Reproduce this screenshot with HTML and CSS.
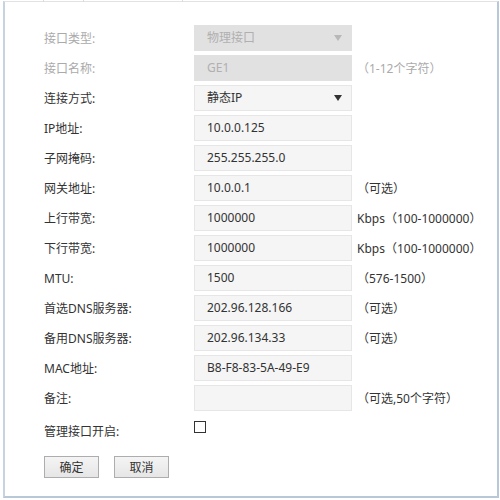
FILE: index.html
```html
<!DOCTYPE html>
<html lang="zh-CN">
<head>
<meta charset="utf-8">
<link rel="stylesheet" href="styles.css">
</head>
<body>
<div class="frame">
  <div class="tabbar"><span class="t1"></span><span class="t2"></span><span class="t3"></span><span class="t4"></span></div>
  <div class="form">
    <div class="row disabled">
      <div class="label">接口类型:</div>
      <div class="box select"><span>物理接口</span><i class="arrow"></i></div>
    </div>
    <div class="row disabled">
      <div class="label">接口名称:</div>
      <div class="box">GE1</div>
      <div class="hint">（1-12个字符）</div>
    </div>
    <div class="row">
      <div class="label">连接方式:</div>
      <div class="box select"><span>静态IP</span><i class="arrow"></i></div>
    </div>
    <div class="row">
      <div class="label">IP地址:</div>
      <div class="box">10.0.0.125</div>
    </div>
    <div class="row">
      <div class="label">子网掩码:</div>
      <div class="box">255.255.255.0</div>
    </div>
    <div class="row">
      <div class="label">网关地址:</div>
      <div class="box">10.0.0.1</div>
      <div class="hint">（可选）</div>
    </div>
    <div class="row">
      <div class="label">上行带宽:</div>
      <div class="box">1000000</div>
      <div class="hint">Kbps（100-1000000）</div>
    </div>
    <div class="row">
      <div class="label">下行带宽:</div>
      <div class="box">1000000</div>
      <div class="hint">Kbps（100-1000000）</div>
    </div>
    <div class="row">
      <div class="label">MTU:</div>
      <div class="box">1500</div>
      <div class="hint">（576-1500）</div>
    </div>
    <div class="row">
      <div class="label">首选DNS服务器:</div>
      <div class="box">202.96.128.166</div>
      <div class="hint">（可选）</div>
    </div>
    <div class="row">
      <div class="label">备用DNS服务器:</div>
      <div class="box">202.96.134.33</div>
      <div class="hint">（可选）</div>
    </div>
    <div class="row">
      <div class="label">MAC地址:</div>
      <div class="box">B8-F8-83-5A-49-E9</div>
    </div>
    <div class="row">
      <div class="label">备注:</div>
      <div class="box"></div>
      <div class="hint">（可选,50个字符）</div>
    </div>
    <div class="row check-row">
      <div class="label">管理接口开启:</div>
      <span class="checkbox"></span>
    </div>
    <div class="buttons">
      <button class="btn">确定</button>
      <button class="btn">取消</button>
    </div>
  </div>
</div>
</body>
</html>
```
FILE: styles.css
```css
html, body {
  margin: 0;
  padding: 0;
  background: #fff;
}
body {
  font-family: "Noto Sans", "Noto Sans CJK SC", sans-serif;
  font-size: 12px;
  color: #333;
}
.frame {
  margin: 1px 0 0 3px;
  width: 492px;
  height: 494px;
  border-top: 1px solid #e2e2e2;
  border-left: 2px solid #c6d4e2;
  border-right: 2px solid #b8c8d8;
  border-bottom: 2px solid #b8c8d8;
}
.tabbar {
  display: flex;
  height: 2px;
  margin-top: -2px;
}
.tabbar span {
  border-right: 1px solid #dcdcdc;
}
.tabbar .t1 { width: 38px; }
.tabbar .t2 { width: 39px; }
.tabbar .t3 { width: 98px; }
.tabbar .t4 { width: 0; border-right: none; }
.form {
  padding: 23px 0 0 39px;
}
.row {
  display: flex;
  align-items: center;
  height: 26px;
  margin-bottom: 4px;
}
.label {
  width: 150px;
  flex: none;
  color: #333;
}
.box {
  box-sizing: border-box;
  width: 158px;
  height: 26px;
  flex: none;
  background: #f5f5f5;
  border: 1px solid #e6e6e6;
  padding: 0 12px;
  display: flex;
  align-items: center;
  justify-content: space-between;
  color: #333;
  line-height: 24px;
}
.hint {
  margin-left: 5px;
  color: #333;
  white-space: nowrap;
}
.disabled .label,
.disabled .hint {
  color: #aaa;
}
.disabled .box {
  background: #e1e1e1;
  border-color: #e1e1e1;
  color: #b0b0b0;
}
.arrow {
  width: 0;
  height: 0;
  border-left: 4.5px solid transparent;
  border-right: 4.5px solid transparent;
  border-top: 6px solid #333;
  margin-right: -3px;
}
.disabled .arrow {
  border-top-color: #b8b8b8;
}
.check-row {
  margin-top: 10px;
  margin-bottom: 0;
  height: 22px;
  align-items: flex-start;
  line-height: 22px;
}
.checkbox {
  box-sizing: border-box;
  width: 12px;
  height: 12px;
  border: 1px solid #333;
  background: #fff;
  flex: none;
}
.buttons {
  display: flex;
  gap: 15px;
  margin-top: 13px;
}
.btn {
  box-sizing: border-box;
  width: 55px;
  height: 22px;
  padding: 0;
  font-family: "Noto Sans", "Noto Sans CJK SC", sans-serif;
  font-size: 12px;
  color: #333;
  background: linear-gradient(#f4f4f4, #e6e6e6);
  border: 1px solid #adadad;
  border-radius: 0;
}
```
